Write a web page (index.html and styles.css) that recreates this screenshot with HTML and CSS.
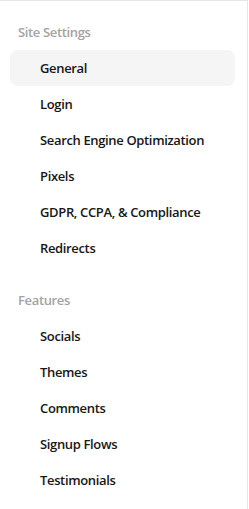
FILE: index.html
```html
<!DOCTYPE html>
<html lang="en">
  <head>
    <meta charset="UTF-8" />
    <meta name="viewport" content="width=device-width, initial-scale=1.0" />
    <title>Settings</title>
    <link rel="stylesheet" href="styles.css">
  </head>
  <body>
    <nav class="sidebar">
      <div class="group">
        <div class="groupTitle">Site Settings</div>
        <a class="item active" href="#">General</a>
        <a class="item" href="#">Login</a>
        <a class="item" href="#">Search Engine Optimization</a>
        <a class="item" href="#">Pixels</a>
        <a class="item" href="#">GDPR, CCPA, &amp; Compliance</a>
        <a class="item" href="#">Redirects</a>
      </div>
      <div class="group">
        <div class="groupTitle">Features</div>
        <a class="item" href="#">Socials</a>
        <a class="item" href="#">Themes</a>
        <a class="item" href="#">Comments</a>
        <a class="item" href="#">Signup Flows</a>
        <a class="item" href="#">Testimonials</a>
      </div>
    </nav>
  </body>
</html>
```

FILE: styles.css
```css
* {
  margin: 0;
  padding: 0;
  box-sizing: border-box;
}
body {
  font-family: "Open Sans", "Noto Sans", sans-serif;
  background: #fff;
}
/*侧边栏*/
.sidebar {
  width: 248px;
  height: 509px;
  padding: 13px 12px 0 10px;
  border-top: 1px solid #e5e5e5;
  border-right: 1px solid #e5e5e5;
  display: flex;
  flex-direction: column;
  gap: 16px;
}
.group {
  display: flex;
  flex-direction: column;
}
.groupTitle {
  height: 36px;
  line-height: 36px;
  padding-left: 8px;
  font-size: 13px;
  font-weight: 600;
  letter-spacing: -0.35px;
  color: #a3a3a3;
}
.item {
  display: block;
  height: 36px;
  line-height: 36px;
  padding-left: 30px;
  border-radius: 8px;
  font-size: 13px;
  font-weight: 600;
  letter-spacing: -0.35px;
  color: #171717;
  text-decoration: none;
}
.item.active {
  background-color: #f5f5f5;
}
```
